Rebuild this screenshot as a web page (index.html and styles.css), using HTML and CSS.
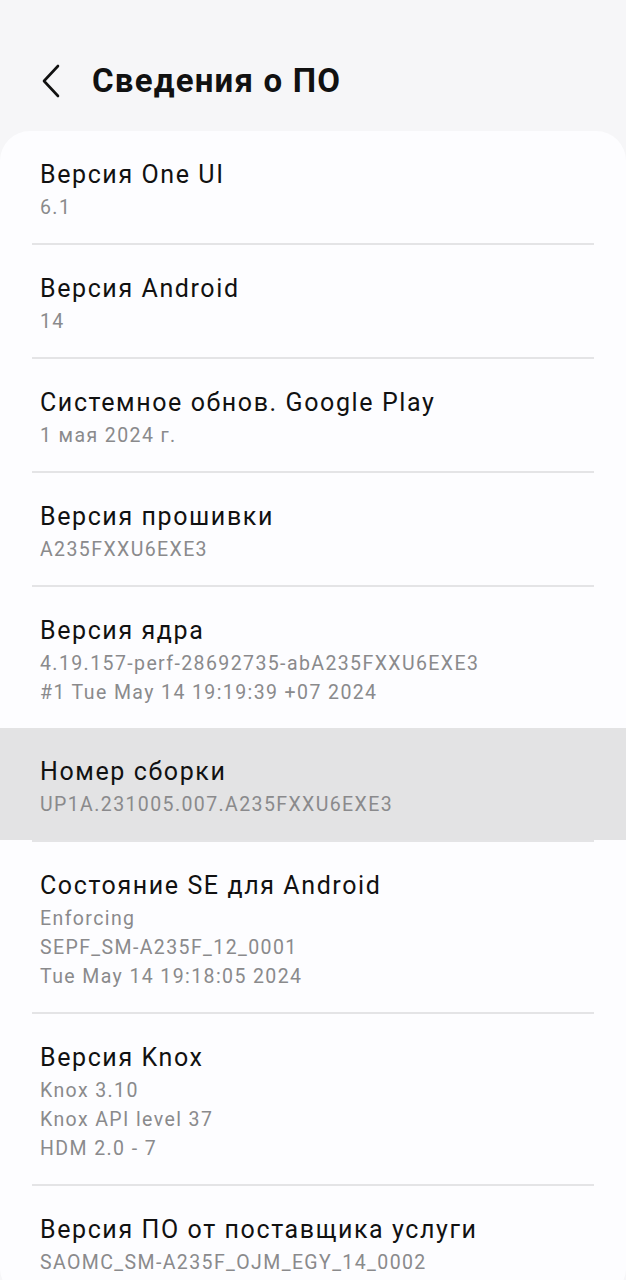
FILE: index.html
```html
<!DOCTYPE html>
<html lang="ru">
<head>
<meta charset="utf-8">
<link rel="stylesheet" href="styles.css">
</head>
<body>
<header class="header">
  <svg class="back" width="24" height="34" viewBox="0 0 24 34"><path d="M18 2 L4 17 L18 32" fill="none" stroke="#111" stroke-width="2.6" stroke-linecap="round" stroke-linejoin="round"/></svg>
  <h1 class="title">Сведения о ПО</h1>
</header>
<main class="card">
  <div class="row">
    <div class="row-title">Версия One UI</div>
    <div class="row-sub">6.1</div>
  </div>
  <div class="divider"></div>
  <div class="row">
    <div class="row-title">Версия Android</div>
    <div class="row-sub">14</div>
  </div>
  <div class="divider"></div>
  <div class="row">
    <div class="row-title">Системное обнов. Google Play</div>
    <div class="row-sub">1 мая 2024 г.</div>
  </div>
  <div class="divider"></div>
  <div class="row">
    <div class="row-title">Версия прошивки</div>
    <div class="row-sub">A235FXXU6EXE3</div>
  </div>
  <div class="divider"></div>
  <div class="row">
    <div class="row-title">Версия ядра</div>
    <div class="row-sub">4.19.157-perf-28692735-abA235FXXU6EXE3<br>#1 Tue May 14 19:19:39 +07 2024</div>
  </div>
  <div class="row row-active">
    <div class="row-title">Номер сборки</div>
    <div class="row-sub">UP1A.231005.007.A235FXXU6EXE3</div>
  </div>
  <div class="divider"></div>
  <div class="row">
    <div class="row-title">Состояние SE для Android</div>
    <div class="row-sub">Enforcing<br>SEPF_SM-A235F_12_0001<br>Tue May 14 19:18:05 2024</div>
  </div>
  <div class="divider"></div>
  <div class="row">
    <div class="row-title">Версия Knox</div>
    <div class="row-sub">Knox 3.10<br>Knox API level 37<br>HDM 2.0 - 7</div>
  </div>
  <div class="divider"></div>
  <div class="row">
    <div class="row-title">Версия ПО от поставщика услуги</div>
    <div class="row-sub">SAOMC_SM-A235F_OJM_EGY_14_0002</div>
  </div>
</main>
</body>
</html>
```

FILE: styles.css
```css
html, body {
  margin: 0;
  padding: 0;
  background: #f6f6f8;
  font-family: Roboto, "Noto Sans", sans-serif;
  color: #111;
  overflow: hidden;
}
.header {
  display: flex;
  align-items: center;
  height: 40px;
  padding: 61px 0 30px 40px;
}
.back {
  display: block;
  margin-right: 28px;
}
.title {
  margin: 0;
  font-size: 33px;
  font-weight: 700;
  line-height: 40px;
  letter-spacing: 1.2px;
  color: #111;
}
.card {
  background: #fdfdff;
  border-radius: 30px;
  overflow: hidden;
  min-height: 1160px;
}
.row {
  padding: 27px 40px 21px;
}
.row-active {
  background: #e3e3e4;
}
.row-title {
  font-size: 25px;
  line-height: 33px;
  letter-spacing: 1.6px;
  color: #111;
}
.row-sub {
  margin-top: 2px;
  font-size: 19.5px;
  line-height: 29px;
  letter-spacing: 1.4px;
  color: #8a8a8c;
}
.divider {
  height: 2px;
  margin: 0 32px;
  background: #e4e4e6;
}
```
